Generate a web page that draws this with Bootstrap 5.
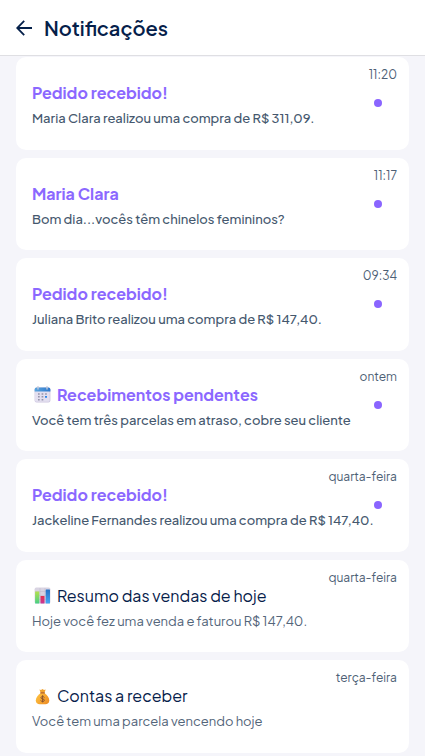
<!DOCTYPE html>
<html lang="pt-BR">
<head>
<meta charset="utf-8">
<meta name="viewport" content="width=device-width, initial-scale=1">
<title>Notificações</title>
<link href="https://cdn.jsdelivr.net/npm/bootstrap@5.3.0/dist/css/bootstrap.min.css" rel="stylesheet">
<style>
  body { background: #f5f5fa; font-family: "Plus Jakarta Sans", Inter, sans-serif; color: #05204a; height: 756px; }
  .topbar { height: 56px; border-color: #dfdfe3 !important; }
  .topbar h1 { font-size: 20px; line-height: 26px; font-weight: 600; }
  .feed { padding-top: 1px; gap: 8px; }
  .notice { height: 92.5px; border-radius: 10px; padding: 8px 12px 0 16px; }
  .when { font-size: 12px; line-height: 20px; height: 16px; color: #4d6075; }
  .title-row { height: 27px; }
  .notice-title { font-size: 16px; line-height: 24px; }
  .unread .notice-title { font-weight: 700; color: #8b68ff; }
  .notice-text { font-size: 13px; line-height: 20px; color: #53657a; }
  .unread .notice-text { font-weight: 500; color: #45586e; }
  .dot { width: 8px; height: 8px; background: #8a65ff; margin: 18.2px 15px 0 0; }
  .emoji { width: 17px; height: 17px; margin: 0 6px 0 2px; }
</style>
<script src="https://cdn.jsdelivr.net/npm/bootstrap@5.3.0/dist/js/bootstrap.bundle.min.js"></script>
</head>
<body class="d-flex flex-column overflow-hidden">
<header class="topbar bg-white border-bottom d-flex align-items-center flex-shrink-0 px-3">
  <svg width="16" height="16" viewBox="0 0 16 16" fill="none" stroke="#05204a" stroke-width="1.8" aria-hidden="true"><path d="M16 8H1.500M8.200 .900 1.200 8l7 7.100"/></svg>
  <h1 class="mb-0 ms-2 ps-1">Notificações</h1>
</header>
<main class="feed d-flex flex-column px-3">
  <article class="notice unread bg-white flex-shrink-0">
    <div class="when text-end">11:20</div>
    <div class="title-row d-flex justify-content-between align-items-start"><div class="notice-title">Pedido recebido!</div><span class="dot rounded-circle"></span></div>
    <div class="notice-text text-nowrap">Maria Clara realizou uma compra de R$ 311,09.</div>
  </article>
  <article class="notice unread bg-white flex-shrink-0">
    <div class="when text-end">11:17</div>
    <div class="title-row d-flex justify-content-between align-items-start"><div class="notice-title">Maria Clara</div><span class="dot rounded-circle"></span></div>
    <div class="notice-text text-nowrap">Bom dia...vocês têm chinelos femininos?</div>
  </article>
  <article class="notice unread bg-white flex-shrink-0">
    <div class="when text-end">09:34</div>
    <div class="title-row d-flex justify-content-between align-items-start"><div class="notice-title">Pedido recebido!</div><span class="dot rounded-circle"></span></div>
    <div class="notice-text text-nowrap">Juliana Brito realizou uma compra de R$ 147,40.</div>
  </article>
  <article class="notice unread bg-white flex-shrink-0">
    <div class="when text-end">ontem</div>
    <div class="title-row d-flex justify-content-between align-items-start">
      <div class="notice-title d-flex align-items-center">
        <svg class="emoji" viewBox="0 0 17 17" aria-hidden="true">
          <defs><linearGradient id="calHead" x2="1"><stop stop-color="#5ba5de"/><stop offset="1" stop-color="#2e78cc"/></linearGradient></defs>
          <rect x=".6" y="1.6" width="15.8" height="15" rx="2" fill="#cdc6df"/>
          <rect x="1" y="5" width="14.6" height="10.8" rx="1.4" fill="#e3dff0"/>
          <path d="M.6 5.500V3.400a2 2 0 0 1 2-2h11.800a2 2 0 0 1 2 2v2.100z" fill="url(#calHead)"/>
          <path d="M4 .5v2.600M13 .5v2.600" stroke="#c9cbd9" stroke-width="1.3" stroke-linecap="round"/>
          <g fill="#9795ab"><path d="M4 7.200h1.700v1.500H4zM7.600 7.200h1.700v1.500H7.600zM11.100 7.200h1.700v1.500h-1.700zM4 10.100h1.700v1.500H4zM7.600 10.100h1.700v1.500H7.600zM4 13h1.700v1.400H4zM7.600 13h1.700v1.400H7.600z"/></g>
          <path d="M11 10h2v1.800h-2z" fill="#2f86e8"/>
        </svg>Recebimentos pendentes</div>
      <span class="dot rounded-circle"></span>
    </div>
    <div class="notice-text text-nowrap">Você tem três parcelas em atraso, cobre seu cliente</div>
  </article>
  <article class="notice unread bg-white flex-shrink-0">
    <div class="when text-end">quarta-feira</div>
    <div class="title-row d-flex justify-content-between align-items-start"><div class="notice-title">Pedido recebido!</div><span class="dot rounded-circle"></span></div>
    <div class="notice-text text-nowrap">Jackeline Fernandes realizou uma compra de R$ 147,40.</div>
  </article>
  <article class="notice bg-white flex-shrink-0">
    <div class="when text-end">quarta-feira</div>
    <div class="title-row"><div class="notice-title d-flex align-items-center">
      <svg class="emoji" viewBox="0 0 17 17" aria-hidden="true">
        <defs>
          <linearGradient id="barG" y2="1" x2="0"><stop stop-color="#b5e04d"/><stop offset="1" stop-color="#45cf86"/></linearGradient>
          <linearGradient id="barR" y2="1" x2="0"><stop stop-color="#e62f4c"/><stop offset="1" stop-color="#c5399c"/></linearGradient>
          <linearGradient id="barB" y2="1" x2="0"><stop stop-color="#2472c8"/><stop offset="1" stop-color="#48a8f4"/></linearGradient>
        </defs>
        <rect x=".6" y=".6" width="15.8" height="16" rx="1.6" fill="#d9d4e2"/>
        <path d="M1 4.500h15M1 8.500h15M1 12.500h15M6 1v15M11 1v15" stroke="#bfb8cc" stroke-width=".5"/>
        <rect x="1.1" y="4.4" width="4.2" height="12.2" rx=".5" fill="url(#barG)"/>
        <rect x="6.5" y="9" width="4" height="7.6" rx=".5" fill="url(#barR)"/>
        <rect x="11.7" y="2.6" width="4.3" height="14" rx=".5" fill="url(#barB)"/>
      </svg>Resumo das vendas de hoje</div></div>
    <div class="notice-text text-nowrap">Hoje você fez uma venda e faturou R$ 147,40.</div>
  </article>
  <article class="notice bg-white flex-shrink-0">
    <div class="when text-end">terça-feira</div>
    <div class="title-row"><div class="notice-title d-flex align-items-center">
      <svg class="emoji" viewBox="0 0 17 17" aria-hidden="true">
        <defs><linearGradient id="bag" x2="1" y2=".6"><stop stop-color="#ffc642"/><stop offset="1" stop-color="#ef9228"/></linearGradient></defs>
        <path d="M5.400 1.400 7 2 8.500.9 10 2l1.700-.6-1.500 3.800H6.900z" fill="#f0a330"/>
        <path d="M6.800 5h3.600c2.400 1.700 4.900 4.400 4.900 7.600 0 2.600-1.800 3.700-3.900 3.700H5.700c-2.100 0-3.900-1.100-3.900-3.700C1.800 9.400 4.300 6.700 6.800 5z" fill="url(#bag)"/>
        <path d="M6.800 4.900h3.600" stroke="#b5652e" stroke-width="1.200" stroke-linecap="round"/>
        <path d="M10.300 9.200c-.5-1-3.400-1-3.400.5 0 1.600 3.500.8 3.500 2.600 0 1.600-3.100 1.500-3.700.4M8.600 7.600v6.400" fill="none" stroke="#8a5330" stroke-width="1" stroke-linecap="round"/>
      </svg>Contas a receber</div></div>
    <div class="notice-text text-nowrap">Você tem uma parcela vencendo hoje</div>
  </article>
</main>
</body>
</html>
